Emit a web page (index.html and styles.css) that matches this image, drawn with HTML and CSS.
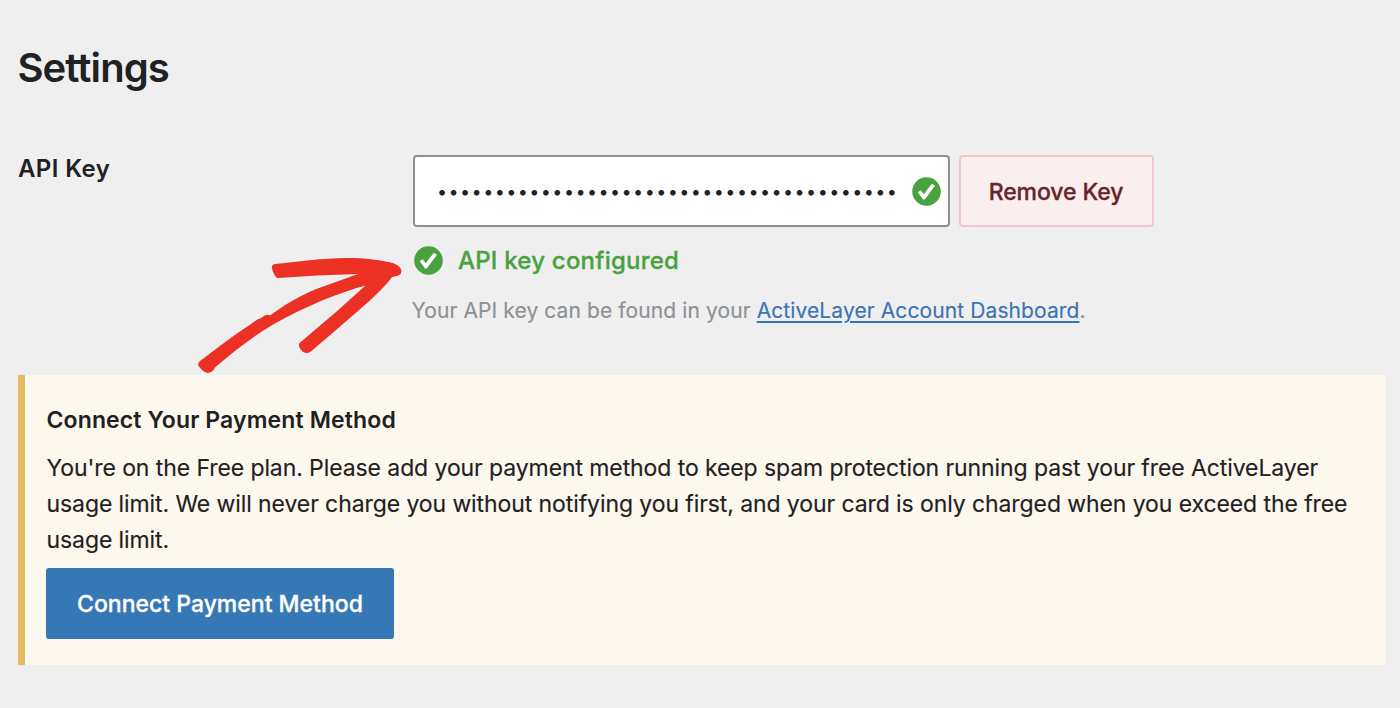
FILE: index.html
```html
<!DOCTYPE html>
<html lang="en">
<head>
<meta charset="utf-8">
<title>Settings</title>
<link rel="stylesheet" href="styles.css">
</head>
<body>
<main class="page">
  <h1 class="title">Settings</h1>
  <section class="setting">
    <label class="setting-label" for="key">API Key</label>
    <div class="setting-body">
      <div class="key-row">
        <div class="key-field">
          <input id="key" class="key-input" type="text" readonly value="••••••••••••••••••••••••••••••••••••••••">
          <svg class="check" viewBox="0 0 29 29"><circle cx="14.5" cy="14.5" r="14.3"/><path d="M5.800 15.300 8.600 13.300 11.700 17.200 19.800 6.700 23 8.800 12.900 22.300Q11.700 23.300 10.700 22Z"/></svg>
        </div>
        <button class="remove" type="button">Remove Key</button>
      </div>
      <div class="status">
        <svg class="check" viewBox="0 0 29 29"><circle cx="14.5" cy="14.5" r="14.3"/><path d="M5.800 15.300 8.600 13.300 11.700 17.200 19.800 6.700 23 8.800 12.900 22.300Q11.700 23.300 10.700 22Z"/></svg>
        <span>API key configured</span>
      </div>
      <p class="hint">Your API key can be found in your <a class="link" href="#">ActiveLayer Account Dashboard</a>.</p>
    </div>
  </section>
  <section class="notice">
    <h2 class="notice-title">Connect Your Payment Method</h2>
    <p class="notice-text">You're on the Free plan. Please add your payment method to keep spam protection running past your free ActiveLayer<br>usage limit. We will never charge you without notifying you first, and your card is only charged when you exceed the free<br>usage limit.</p>
    <button class="connect" type="button">Connect Payment Method</button>
  </section>
  <svg class="arrow" viewBox="0 0 240 145"><path d="M92 29Q91 25 95 24C115 22 144 18 167 18C184 18 203 20 214 23.5Q221 26 221.5 31.5Q221 36 212 37C207 44 200 51 190 60.5C170 78 149 96 131 111.5Q128 114 123 112Q118 107 119 103.5L156 72L185.500 45.500C158 53 126 66 94 84C72 97 54 111 35 127.500Q33 132 28 133Q23 132 18.500 126Q17 124 20 121C36 109 54 95 69 85.500Q77 79 81 78Q87 73 90 75.500C104 65 120 56 135 49.500L178 34Q137 35 98 38Q95 38 92 29Z"/></svg>
</main>
</body>
</html>
```
FILE: styles.css
```css
* { box-sizing: border-box; }
body { margin: 0; background: #efeff0; color: #1f2123; font-family: Inter, "Liberation Sans", sans-serif; }
.page { position: relative; height: 708px; padding: 44px 14px 0 18px; overflow: hidden; }
h1, h2, p { margin: 0; }
.title { margin-left: -0.5px; font-size: 40px; line-height: 48px; font-weight: 600; letter-spacing: -0.9px; }
.setting { display: flex; height: 283px; padding-top: 63px; }
.setting-label { width: 395px; padding-top: 1px; font-size: 24px; line-height: 26px; font-weight: 600; letter-spacing: 0.4px; }
.setting-body { flex: 1; }
.key-row { display: flex; gap: 9px; }
.key-field { display: flex; align-items: center; width: 536.5px; height: 72px; padding: 0 7px 0 22px; background: #fff; border: 2px solid #8e8f90; border-radius: 4px; }
.key-input { flex: 1; min-width: 0; padding: 0; border: 0; outline: 0; background: none; color: #1f2123; font: 18px Inter, sans-serif; letter-spacing: 1.41px; }
.check { flex: none; width: 29px; height: 29px; fill: #49a23f; }
.check path { fill: #fff; }
.remove { width: 195px; height: 72px; padding: 1px 0 0; border: 2px solid #eec8ca; border-radius: 4px; background: #fbeeee; color: #68242a; font: 500 23px Inter, sans-serif; letter-spacing: -0.1px; -webkit-text-stroke: 0.3px currentColor; }
.status { display: flex; align-items: center; gap: 15px; margin: 18px 0 0 1px; color: #49a23f; font-size: 24px; line-height: 30px; font-weight: 500; letter-spacing: 0.22px; -webkit-text-stroke: 0.3px currentColor; }
.status span { padding-top: 1px; }
.status .check { stroke: none; -webkit-text-stroke: 0; }
.hint { margin: 21px 0 0 -1.500px; color: #8d9193; font-size: 21px; line-height: 28px; letter-spacing: 0.1px; -webkit-text-stroke: 0.15px currentColor; }
.link { color: #3a74b5; text-decoration-thickness: 2px; text-underline-offset: 2.5px; text-decoration-skip-ink: auto; }
.notice { height: 290px; padding: 28px 0 0 21.500px; border-left: 7px solid #e8ba5f; background: #fdf8ee; }
.notice-title { font-size: 23px; line-height: 34px; font-weight: 600; letter-spacing: 0.13px; }
.notice-text { margin-top: 13px; font-size: 23px; line-height: 36px; letter-spacing: -0.09px; white-space: nowrap; -webkit-text-stroke: 0.15px currentColor; }
.connect { display: block; width: 348px; height: 71px; margin: 10px 0 0 -0.5px; padding: 0; border: 0; border-radius: 3px; background: #3578b5; color: #fff; font: 500 23px Inter, sans-serif; letter-spacing: 0; -webkit-text-stroke: 0.3px currentColor; }
.arrow { position: absolute; left: 180px; top: 240px; width: 240px; height: 145px; fill: #ec3023; }
```
